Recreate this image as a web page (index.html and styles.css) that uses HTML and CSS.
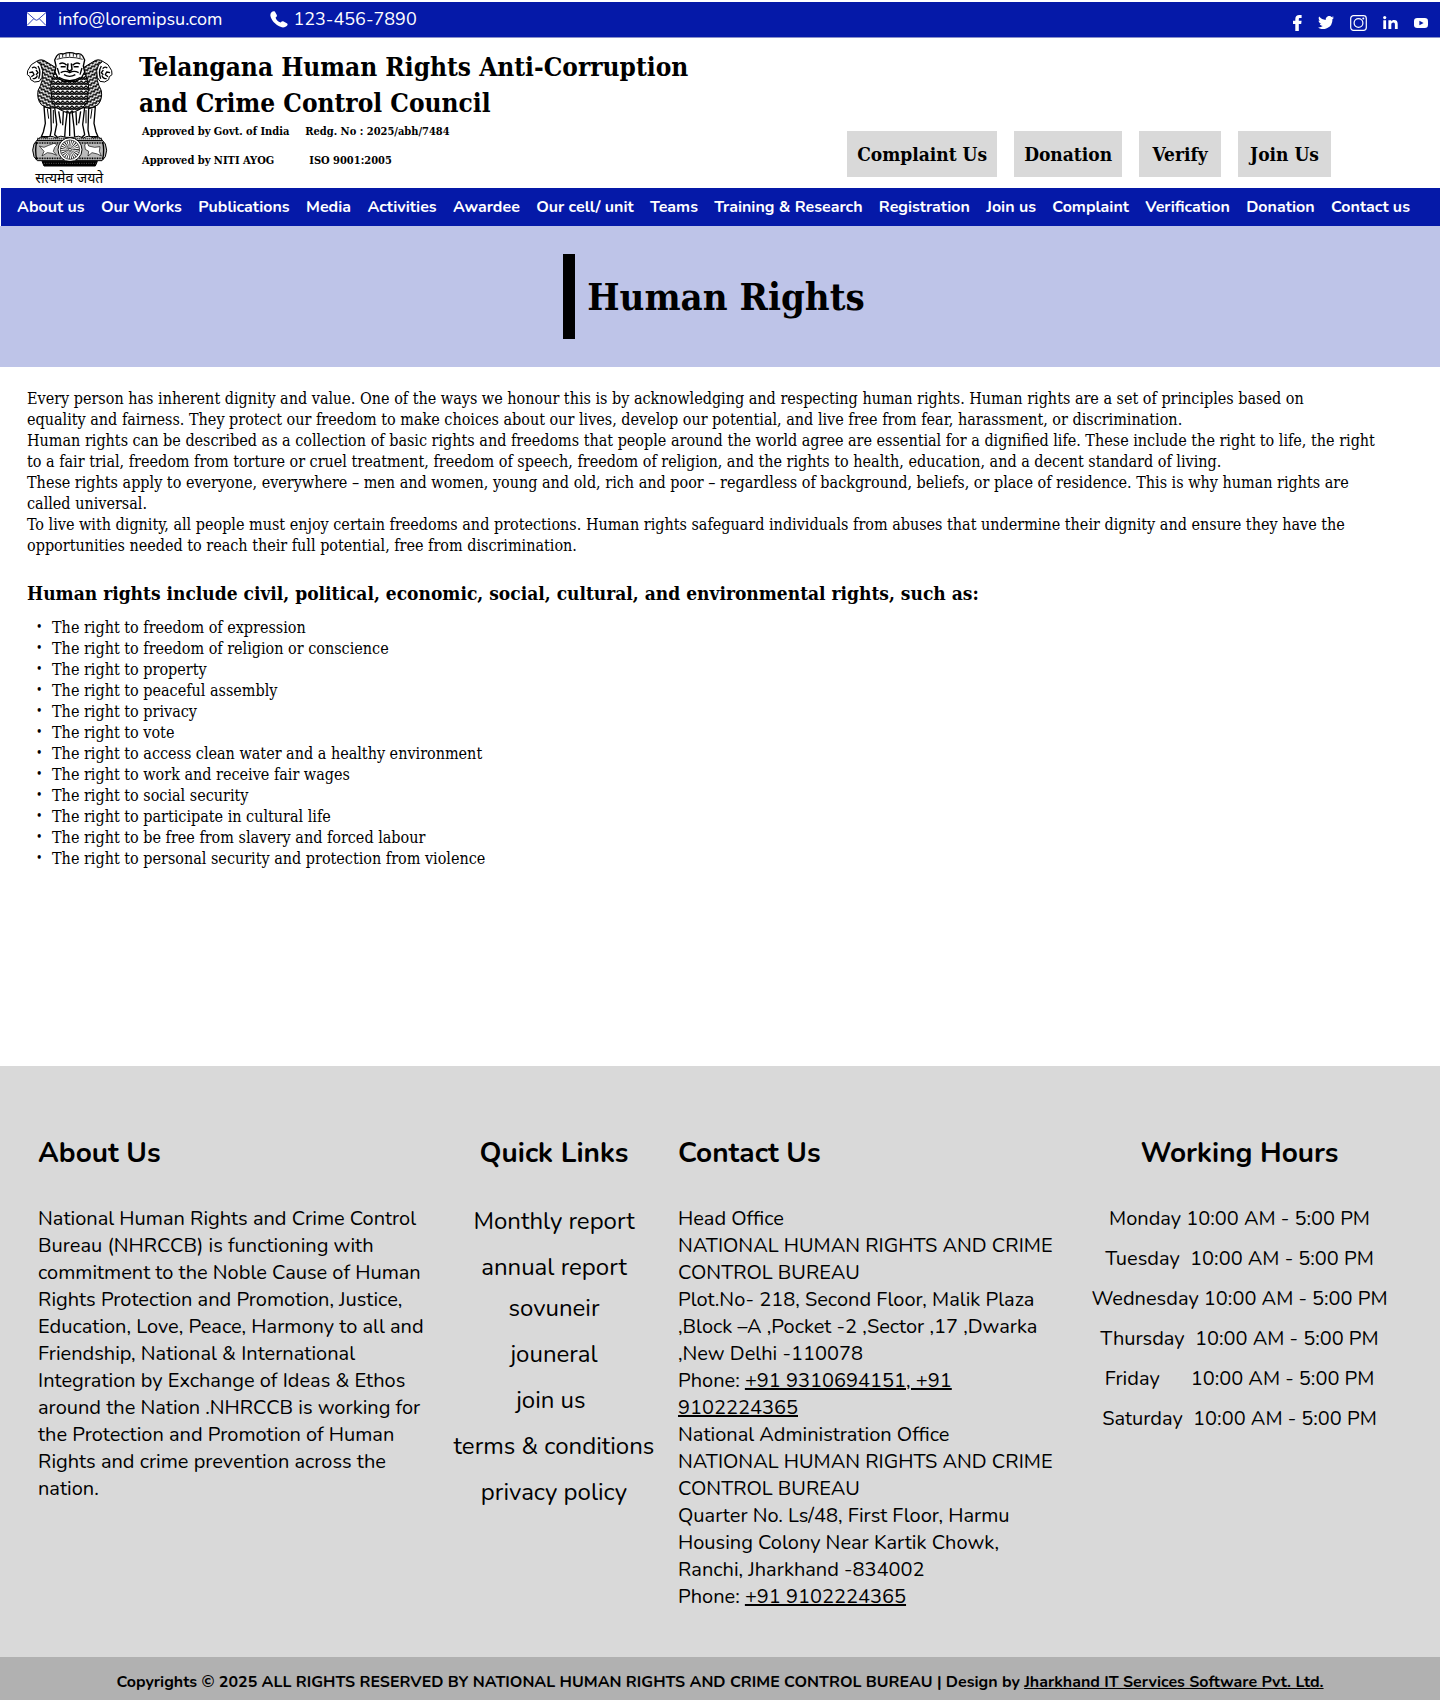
FILE: index.html
```html
<!DOCTYPE html>
<html lang="en">
<head>
<meta charset="utf-8">
<meta name="viewport" content="width=device-width, initial-scale=1">
<title>Human Rights</title>
<link rel="stylesheet" href="styles.css">
</head>
<body>
<div class="topbar">
  <a class="contact mail" href="mailto:info@loremipsu.com">
    <svg width="19" height="14" viewBox="0 0 19 14" aria-hidden="true"><rect width="19" height="14" fill="#fff"/><path d="M0 0.5 8 7.6Q9.500 8.800 11 7.600L19 .5M0 13.500 6.800 6.600M19 13.500 12.200 6.600" fill="none" stroke="#0519a8" stroke-width=".8"/></svg>
    <span>info@loremipsu.com</span>
  </a>
  <a class="contact phone" href="tel:1234567890">
    <svg width="18" height="17" viewBox="0 0 18 17" aria-hidden="true"><path d="M1.500 1.300C2.500.3 4.200-.1 5 .8L6.800 4C7.200 5 6.700 5.800 5.600 6.600 5.800 8.600 8 11 10.700 11.600 11.600 10.300 12.600 9.900 13.600 10.500L16.800 12.300C18 13 17.800 14 16.700 15 14.600 17 11.400 16.900 7.800 14.600 3.800 12 .9 8 .4 4.800.2 3.400.6 2.200 1.500 1.300Z" fill="#fff"/></svg>
    <span>123-456-7890</span>
  </a>
  <div class="social">
    <a href="#" aria-label="Facebook"><svg width="9" height="16" viewBox="0 0 9 16"><path d="M2.300 16V9H0V5.800h2.300V3.900C2.300 1.400 3.800 0 6.200 0c1 0 1.900.1 2.400.1v2.900H7.200C6 3 5.800 3.500 5.800 4.200v1.600h2.800L8.200 9H5.800v7Z" fill="#fff"/></svg></a>
    <a href="#" aria-label="Twitter"><svg width="16" height="13" viewBox="0 0 16 13"><path d="M16 1.500c-.6.300-1.200.4-1.900.5.7-.4 1.200-1 1.400-1.800-.6.400-1.300.6-2.100.8A3.300 3.300 0 0 0 7.800 4C5.100 3.900 2.700 2.600 1.100.6.300 2 .7 4 2.100 5c-.5 0-1-.2-1.500-.4 0 1.600 1.100 2.900 2.600 3.200-.5.100-1 .1-1.500 0 .4 1.300 1.600 2.200 3.100 2.300A6.600 6.600 0 0 1 0 11.500 9.300 9.300 0 0 0 14.400 3.200c.6-.5 1.200-1 1.600-1.700Z" fill="#fff"/></svg></a>
    <a href="#" aria-label="Instagram"><svg width="17" height="16" viewBox="0 0 17 16"><g fill="none" stroke="#fff" stroke-width="1.200"><rect x=".7" y=".7" width="15.600" height="14.600" rx="2.800"/><circle cx="8.500" cy="8" r="4.400"/></g><circle cx="13.300" cy="3.400" r="1" fill="#fff"/></svg></a>
    <a href="#" aria-label="LinkedIn"><svg width="15" height="13" viewBox="0 0 15 13"><circle cx="1.700" cy="1.600" r="1.600" fill="#fff"/><path d="M.3 4.300H3.100V13H.3ZM5.400 4.300h2.700v1.200c.6-1 1.600-1.500 3-1.500 2.700 0 3.600 1.600 3.600 4.100V13H11.900V8.700c0-1.200-.2-2.200-1.500-2.200S8.300 7.400 8.300 8.600V13H5.400Z" fill="#fff"/></svg></a>
    <a href="#" aria-label="YouTube"><svg width="14" height="10" viewBox="0 0 14 10"><rect width="14" height="10" rx="3.200" fill="#fff"/><path d="M5.400 2.700 9.600 5 5.400 7.300Z" fill="#0519a8"/></svg></a>
  </div>
</div>

<header class="masthead">
  <svg class="emblem" viewBox="0 0 330 444" role="img" aria-label="State Emblem of India">
    <defs>
      <pattern id="mane" width="14" height="15" patternUnits="userSpaceOnUse">
        <rect width="14" height="15" fill="#fff"/>
        <path d="M0 2 7 11 14 2M0 9.500 5 15.500M14 9.500 9 15.500" fill="none" stroke="#000" stroke-width="4"/>
      </pattern>
      <pattern id="maneLeft" width="12" height="11" patternUnits="userSpaceOnUse" patternTransform="rotate(28)">
        <rect width="12" height="11" fill="#fff"/>
        <path d="M0 2Q6 12 12 2M6 7V11" fill="none" stroke="#000" stroke-width="4"/>
      </pattern>
      <g id="sideLion" stroke="#000" stroke-linejoin="round">
        <path d="M62 64Q76 54 92 66L118 82 122 150 114 204Q92 208 76 194 62 178 66 152 74 138 78 122 84 84 62 64Z" fill="url(#maneLeft)" stroke-width="3"/>
        <path d="M62 64 46 74 35 92 34 104 42 110 44 119 56 126 70 124 78 112 80 92 74 74Z" fill="#fff" stroke-width="3"/>
        <path d="M48 84Q56 78 62 86M40 98 50 96 54 104 46 110M50 116Q62 116 64 106M66 78Q76 94 68 116M60 90 66 98 60 104" fill="none" stroke-width="4"/>
        <path d="M84 200 88 250 82 276 76 290H102L106 270 104 206Z" fill="#fff" stroke-width="4"/>
        <path d="M94 206 98 236M112 210V250" fill="none" stroke-width="3"/>
      </g>
    </defs>
    <use href="#sideLion"/>
    <use href="#sideLion" transform="matrix(-1 0 0 1 322 0)"/>
    <g stroke="#000" stroke-linejoin="round" stroke-width="3">
      <path d="M116 202 122 254 116 284 124 292H146L148 262 154 212ZM206 202 200 254 206 284 198 292H176L174 262 168 212Z" fill="#fff" stroke-width="4"/>
      <path d="M128 214 134 250M142 216 140 256M194 214 188 250M180 216 182 256M161 218V288" fill="none" stroke-width="4"/>
      <path d="M116 94 104 134 108 186Q124 212 161 220 198 212 214 186L218 134 206 94 186 122H136Z" fill="url(#mane)"/>
      <path d="M122 48Q128 38 142 42 161 34 180 42 194 38 200 48L206 60 202 78 206 96 196 114 178 124H144L126 114 117 96 120 78 116 60Z" fill="#fff" stroke-width="4"/>
      <path d="M122 58Q161 46 200 58M130 44V54M140 42V52M150 40V50M161 38V50M172 40V50M182 42V52M192 44V54" fill="none" stroke-width="2.500"/>
      <path d="M130 72Q142 64 152 76M170 76Q180 64 192 72M134 80H149M173 80H188M156 70 154 88 161 94 168 88 166 70" fill="none" stroke-width="4.500"/>
      <path d="M134 98Q148 90 161 98 174 90 188 98M144 104Q161 114 178 104M124 84 130 104M198 84 192 104M128 112Q161 132 194 112" fill="none" stroke-width="4"/>
    </g>
    <g stroke="#000" stroke-width="3">
      <path d="M62 302Q72 286 90 294 104 284 120 294 134 284 150 292H172Q188 284 202 294 218 284 232 294 250 286 260 302Z" fill="#ddd"/>
      <path d="M64 296H258" stroke-dasharray="3 3" stroke-width="5"/>
      <path d="M62 302H260L268 312Q276 330 268 350L258 362H64L54 350Q46 330 54 312Z" fill="#bbb"/>
      <path d="M58 309H264M58 355H264" stroke-dasharray="3 2" stroke-width="5"/>
      <path d="M62 306Q56 330 62 358M260 306Q266 330 260 358" fill="none" stroke-width="4"/>
      <path d="M70 318 84 322 98 316 114 310 124 314 116 322 112 334 122 346 108 340 94 338 78 348 84 334Z" fill="#fff" stroke-width="2"/>
      <path d="M206 314 214 308 218 318 236 322 252 320 250 334 256 348 244 342 228 338 216 348 218 334 208 328Z" fill="#fff" stroke-width="2"/>
      <circle cx="162" cy="329" r="36" fill="#fff"/>
      <circle cx="162" cy="329" r="29" fill="none" stroke-width="2"/>
      <circle cx="162" cy="329" r="16" fill="none" stroke-width="24" stroke-dasharray="1.500 2.690"/>
      <circle cx="162" cy="329" r="4" fill="#fff" stroke-width="2"/>
      <path d="M78 364H244L238 378H84Z"/>
      <path d="M84 370H240" stroke="#888" stroke-dasharray="3 4" stroke-width="2"/>
    </g>
    <text class="motto" x="160" y="428" text-anchor="middle">सत्यमेव जयते</text>
  </svg>
  <div class="org">
    <p class="org-name">Telangana Human Rights Anti-Corruption<br>and Crime Control Council</p>
    <div class="approvals">
      <span>Approved by Govt. of India</span><span>Redg. No : 2025/abh/7484</span>
    </div>
    <div class="approvals wide">
      <span>Approved by NITI AYOG</span><span>ISO 9001:2005</span>
    </div>
  </div>
  <div class="actions">
    <button type="button">Complaint Us</button>
    <button type="button">Donation</button>
    <button type="button" class="short">Verify</button>
    <button type="button" class="short">Join Us</button>
  </div>
</header>

<nav class="mainnav">
  <a href="#">About us</a><a href="#">Our Works</a><a href="#">Publications</a><a href="#">Media</a><a href="#">Activities</a><a href="#">Awardee</a><a href="#">Our cell/ unit</a><a href="#">Teams</a><a href="#">Training &amp; Research</a><a href="#">Registration</a><a href="#">Join us</a><a href="#">Complaint</a><a href="#">Verification</a><a href="#">Donation</a><a href="#">Contact us</a>
</nav>

<div class="banner"><h1>Human Rights</h1></div>

<main class="content">
  <p>Every person has inherent dignity and value. One of the ways we honour this is by acknowledging and respecting human rights. Human rights are a set of principles based on<br>equality and fairness. They protect our freedom to make choices about our lives, develop our potential, and live free from fear, harassment, or discrimination.</p>
  <p>Human rights can be described as a collection of basic rights and freedoms that people around the world agree are essential for a dignified life. These include the right to life, the right to a fair trial, freedom from torture or cruel treatment, freedom of speech, freedom of religion, and the rights to health, education, and a decent standard of living.</p>
  <p>These rights apply to everyone, everywhere – men and women, young and old, rich and poor – regardless of background, beliefs, or place of residence. This is why human rights are called universal.</p>
  <p>To live with dignity, all people must enjoy certain freedoms and protections. Human rights safeguard individuals from abuses that undermine their dignity and ensure they have the opportunities needed to reach their full potential, free from discrimination.</p>
  <h2>Human rights include civil, political, economic, social, cultural, and environmental rights, such as:</h2>
  <ul>
    <li>The right to freedom of expression</li>
    <li>The right to freedom of religion or conscience</li>
    <li>The right to property</li>
    <li>The right to peaceful assembly</li>
    <li>The right to privacy</li>
    <li>The right to vote</li>
    <li>The right to access clean water and a healthy environment</li>
    <li>The right to work and receive fair wages</li>
    <li>The right to social security</li>
    <li>The right to participate in cultural life</li>
    <li>The right to be free from slavery and forced labour</li>
    <li>The right to personal security and protection from violence</li>
  </ul>
</main>

<footer>
  <div class="columns">
    <section>
      <h3>About Us</h3>
      <p>National Human Rights and Crime Control Bureau (NHRCCB) is functioning with commitment to the Noble Cause of Human Rights Protection and Promotion, Justice, Education, Love, Peace, Harmony to all and Friendship, National &amp; International Integration by Exchange of Ideas &amp; Ethos around the Nation .NHRCCB is working for the Protection and Promotion of Human Rights and crime prevention across the nation.</p>
    </section>
    <section class="centered">
      <h3>Quick Links</h3>
      <ul class="links">
        <li><a href="#">Monthly report</a></li>
        <li><a href="#">annual report</a></li>
        <li class="close"><a href="#">sovuneir</a></li>
        <li><a href="#">jouneral</a></li>
        <li><a href="#">join us</a>&nbsp;</li>
        <li><a href="#">terms &amp; conditions</a></li>
        <li><a href="#">privacy policy</a></li>
      </ul>
    </section>
    <section>
      <h3>Contact Us</h3>
      <p>Head Office<br>NATIONAL HUMAN RIGHTS AND CRIME CONTROL BUREAU</p>
      <p>Plot.No- 218, Second Floor, Malik Plaza ,Block –A ,Pocket -2 ,Sector ,17 ,Dwarka ,New Delhi -110078</p>
      <p>Phone: <a href="tel:+919310694151">+91 9310694151, +91 9102224365</a></p>
      <p>National Administration Office<br>NATIONAL HUMAN RIGHTS AND CRIME CONTROL BUREAU</p>
      <p>Quarter No. Ls/48, First Floor, Harmu Housing Colony Near Kartik Chowk, Ranchi, Jharkhand -834002</p>
      <p>Phone: <a href="tel:+919102224365">+91 9102224365</a></p>
    </section>
    <section class="centered">
      <h3>Working Hours</h3>
      <ul class="hours">
        <li>Monday 10:00 AM - 5:00 PM</li>
        <li>Tuesday  10:00 AM - 5:00 PM</li>
        <li>Wednesday 10:00 AM - 5:00 PM</li>
        <li>Thursday  10:00 AM - 5:00 PM</li>
        <li>Friday      10:00 AM - 5:00 PM</li>
        <li>Saturday  10:00 AM - 5:00 PM</li>
      </ul>
    </section>
  </div>
  <div class="copyright">Copyrights © 2025 ALL RIGHTS RESERVED BY NATIONAL HUMAN RIGHTS AND CRIME CONTROL BUREAU | Design by <a href="#">Jharkhand IT Services Software Pvt. Ltd.</a></div>
</footer>
</body>
</html>
```
FILE: styles.css
```css
:root {
  --blue: #0519a8;
  --slab: "Roboto Slab", "DejaVu Serif Condensed", "DejaVu Serif", serif;
  --round: Nunito, "Open Sans", sans-serif;
}

* { box-sizing: border-box; }

body {
  margin: 0;
  padding-top: 2px;
  background: #fff;
  color: #000;
  font-family: var(--round);
}

h1, h2, h3, p, ul { margin: 0; padding: 0; }
ul { list-style: none; }
a { color: inherit; text-decoration: none; }
svg { display: block; flex: none; }

.topbar {
  display: flex;
  align-items: flex-start;
  height: 36px;
  padding: 4px 12px 0 27px;
  border-bottom: 1px solid #8a90c8;
  background: var(--blue);
  color: #fff;
  font-size: 18px;
  line-height: 26px;
}
.contact { display: flex; align-items: center; }
.mail { gap: 12px; }
.phone { gap: 5px; margin-left: 48px; }
.social {
  display: flex;
  align-items: center;
  gap: 16px;
  height: 33px;
  margin-left: auto;
}

.masthead {
  display: flex;
  align-items: flex-start;
  height: 150px;
  padding: 0 109px 0 16px;
}
.emblem { width: 110px; height: 148px; margin-top: 2px; }
.motto { font-family: "Noto Sans Devanagari", "Noto Sans", sans-serif; font-size: 42px; }
.org { margin-left: 13px; padding-top: 11px; font-family: var(--slab); font-weight: 700; }
.org-name { font-size: 26px; line-height: 36px; white-space: nowrap; }
.approvals {
  display: flex;
  gap: 16px;
  margin-top: 1px;
  padding-left: 3px;
  font-size: 11px;
  line-height: 20px;
  white-space: nowrap;
}
.wide { gap: 35px; margin-top: 9px; }
.actions { display: flex; gap: 17px; margin: 93px 0 0 auto; }
.actions button {
  min-width: 82px;
  height: 46px;
  padding: 0 10px;
  border: 0;
  background: #d9d9d9;
  color: #000;
  font-family: var(--slab);
  font-size: 19px;
  font-weight: 700;
  white-space: nowrap;
}
.actions .short { padding: 0 12px; }

.mainnav {
  display: flex;
  justify-content: space-between;
  margin-left: 1px;
  padding: 0 30px 0 16px;
  background: var(--blue);
  color: #fff;
  font-size: 16px;
  font-weight: 700;
  line-height: 38px;
  white-space: nowrap;
}

.banner {
  display: flex;
  justify-content: center;
  padding: 28px 0;
  background: #bec4e8;
}
.banner h1 {
  padding: 0 12px;
  border-left: 12px solid #000;
  font-family: var(--slab);
  font-size: 38px;
  line-height: 85px;
}

.content {
  padding: 21px 52px 197px 27px;
  font-family: var(--slab);
  font-size: 16px;
  line-height: 21px;
}
.content h2 {
  margin: 23px 0 10px;
  font-size: 19px;
  line-height: 28px;
}
.content li { display: flex; }
.content li::before { content: "•"; width: 16px; padding-left: 9px; font-size: 12px; }

footer { background: #d9d9d9; }
.columns {
  display: grid;
  grid-template-columns: 392fr 204fr 390fr 299fr;
  column-gap: 22px;
  padding: 68px 51px 47px 38px;
  font-size: 20px;
  line-height: 27px;
}
.columns h3 { margin-bottom: 33px; font-size: 28px; line-height: 38px; white-space: nowrap; }
.columns p a, .copyright a { text-decoration: underline; }
.centered { text-align: center; }
.links { font-size: 24px; line-height: 33px; white-space: nowrap; }
.links li + li { margin-top: 13px; }
.links li.close { margin-top: 8px; }
.hours li { white-space: pre; }
.hours li + li { margin-top: 13px; }

.copyright {
  padding: 12px 20px 4px;
  background: #b1b1b1;
  font-size: 16px;
  font-weight: 700;
  line-height: 27px;
  text-align: center;
}
```
